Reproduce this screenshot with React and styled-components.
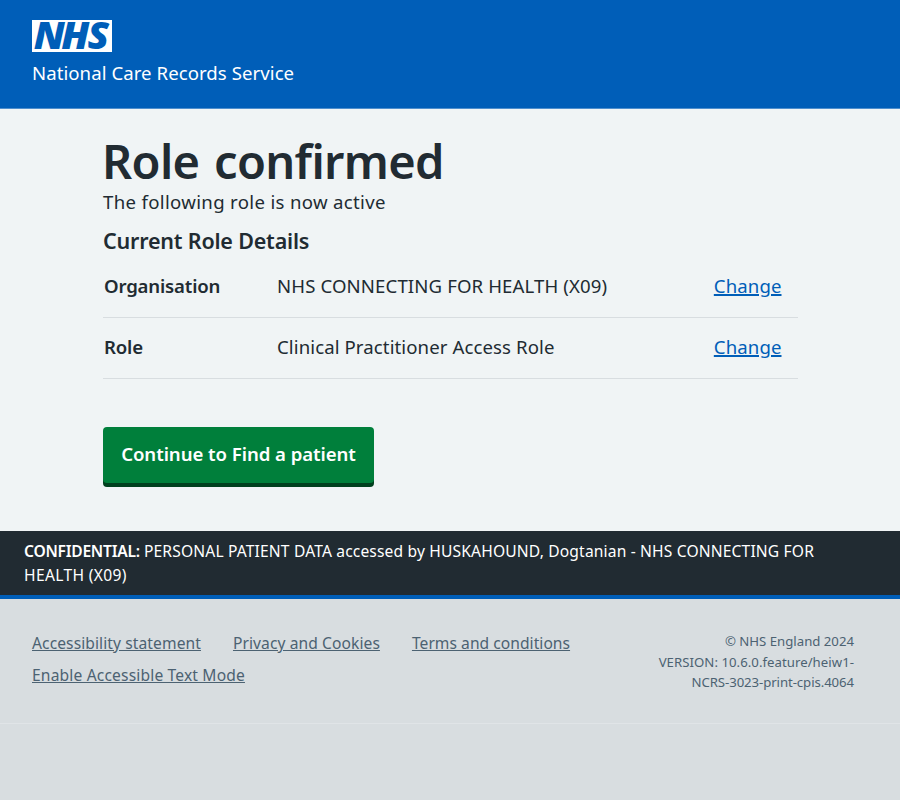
import React from "react";
import styled, { createGlobalStyle } from "styled-components";

const GlobalStyle = createGlobalStyle`
  *, *::before, *::after { box-sizing: border-box; }
  body {
    margin: 0;
    background: #d8dde0;
    color: #212b32;
    font-family: "Noto Sans", Arial, sans-serif;
    font-size: 18.6px;
    line-height: 28px;
  }
`;

const Page = styled.div`
  min-height: 800px;
  display: flex;
  flex-direction: column;
`;

const Header = styled.header`
  height: 109px;
  padding: 20px 32px 0;
  background: #005eb8;
  border-bottom: 1px solid #4f8fcd;
  color: #fff;
`;

const Logo = styled.svg`
  display: block;
  width: 80px;
  height: 32px;
  overflow: visible;
`;

const LogoText = styled.text`
  font: italic 900 36.4px "Noto Sans", Arial, sans-serif;
  fill: #005eb8;
`;

const Tracked = styled.span`
  letter-spacing: ${(p) => p.$track || 0}px;
`;

const ServiceName = styled.div`
  margin-top: 7px;
  letter-spacing: 0.06px;
`;

const Main = styled.main`
  height: 422px;
  padding: 24px 103px 0;
  background: #f0f4f5;
`;

const Title = styled.h1`
  margin: 0 0 0 -1px;
  font-size: 47px;
  font-weight: 600;
  line-height: 56px;
  letter-spacing: -0.65px;
  word-spacing: 3px;
`;

const Intro = styled.p`
  margin: -1px 0 0;
  letter-spacing: 0.33px;
`;

const Subtitle = styled.h2`
  margin: 9px 0 0;
  font-size: 21.5px;
  font-weight: 600;
  line-height: 32px;
  letter-spacing: -0.19px;
`;

const Summary = styled.dl`
  margin: 0 0 48px;
`;

const SummaryRow = styled.div`
  display: grid;
  grid-template-columns: 173px 1fr auto;
  width: 695px;
  padding: 15px 16.5px 17px 1px;
  border-bottom: 1px solid #d8dde0;
`;

const Key = styled.dt`
  font-weight: 600;
  letter-spacing: -0.18px;
`;

const Value = styled.dd`
  margin: 0;
`;

const ChangeLink = styled.a`
  color: #005eb8;
  letter-spacing: 0.1px;
  text-decoration: underline;
  text-decoration-thickness: 1.5px;
  cursor: pointer;
`;

const Button = styled.button`
  display: block;
  width: 271px;
  height: 56px;
  padding: 13px 0 15px;
  border: 0;
  border-radius: 4px;
  background: #007f3b;
  box-shadow: 0 4px 0 #00401e;
  color: #fff;
  font: inherit;
  font-weight: 600;
  letter-spacing: -0.06px;
  white-space: nowrap;
`;

const Banner = styled.div`
  height: 64px;
  padding: 8px 60px 8px 24px;
  background: #212b32;
  color: #fff;
  font-size: 15.6px;
  line-height: 24px;
  letter-spacing: 0.155px;
`;

const BannerLabel = styled.strong`
  font-weight: 600;
  letter-spacing: -0.24px;
`;

const Footer = styled.footer`
  display: flex;
  justify-content: space-between;
  height: 129px;
  padding: 32px 46px 0 32px;
  border-top: 4px solid #005eb8;
  border-bottom: 1px solid #e0e4e7;
  color: #4c6272;
`;

const FooterLinks = styled.nav`
  display: flex;
  flex-wrap: wrap;
  align-content: flex-start;
  gap: 8px 32px;
  width: 570px;
  font-size: 15.6px;
  line-height: 24px;
`;

const FooterLink = styled.a`
  letter-spacing: ${(p) => p.$track}px;
  text-decoration: underline;
  cursor: pointer;
`;

const Version = styled.div`
  width: 230px;
  font-size: 13.2px;
  line-height: 20.5px;
  text-align: right;
  white-space: nowrap;
`;

const roles = [
  { key: "Organisation", value: "NHS CONNECTING FOR HEALTH (X09)", track: 0.12 },
  { key: "Role", value: "Clinical Practitioner Access Role", track: 0.1 },
];

const links = [
  { label: "Accessibility statement", track: 0.09 },
  { label: "Privacy and Cookies", track: 0.08 },
  { label: "Terms and conditions", track: 0.04 },
  { label: "Enable Accessible Text Mode", track: 0.16 },
];

export default function App() {
  return (
    <Page>
      <GlobalStyle />
      <Header>
        <Logo viewBox="0 0 80 32" role="img" aria-label="NHS">
          <rect width="80" height="32" fill="#fff" />
          <LogoText x="1.7 27.2 51.3" y="29" transform="scale(1.08 1)">NHS</LogoText>
        </Logo>
        <ServiceName>National Care Records Service</ServiceName>
      </Header>
      <Main>
        <Title>Role confirmed</Title>
        <Intro>The following role is now active</Intro>
        <Subtitle>Current Role Details</Subtitle>
        <Summary>
          {roles.map((r) => (
            <SummaryRow key={r.key}>
              <Key>{r.key}</Key>
              <Value>
                <Tracked $track={r.track}>{r.value}</Tracked>
              </Value>
              <ChangeLink>Change</ChangeLink>
            </SummaryRow>
          ))}
        </Summary>
        <Button>Continue to Find a patient</Button>
      </Main>
      <Banner>
        <BannerLabel>CONFIDENTIAL:</BannerLabel> PERSONAL PATIENT DATA accessed by HUSKAHOUND, Dogtanian - NHS CONNECTING FOR{" "}
        <Tracked $track={0.34}>HEALTH (X09)</Tracked>
      </Banner>
      <Footer>
        <FooterLinks>
          {links.map((l) => (
            <FooterLink key={l.label} $track={l.track}>
              {l.label}
            </FooterLink>
          ))}
        </FooterLinks>
        <Version>
          © NHS England 2024
          <br />
          <Tracked $track={0.04}>VERSION: 10.6.0.feature/heiw1-</Tracked>
          <br />
          <Tracked $track={-0.08}>NCRS-3023-print-cpis.4064</Tracked>
        </Version>
      </Footer>
    </Page>
  );
}
